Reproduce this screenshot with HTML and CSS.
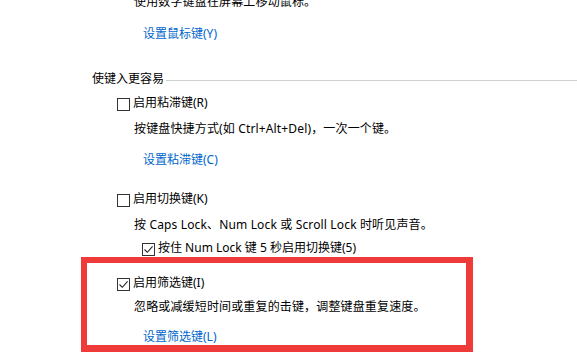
FILE: index.html
```html
<!DOCTYPE html>
<html lang="zh-CN">
<head>
<meta charset="utf-8">
<title>键盘设置</title>
<link rel="stylesheet" href="styles.css">
</head>
<body>
<div class="page">
  <div class="row desc first">使用数字键盘在屏幕上移动鼠标。</div>
  <div class="row link g16">设置鼠标键(Y)</div>

  <div class="row heading g29"><span>使键入更容易</span><span class="rule"></span></div>

  <div class="row check g8"><span class="box"></span><span class="label">启用粘滞键(R)</span></div>
  <div class="row desc g10">按键盘快捷方式(如 Ctrl+Alt+Del)，一次一个键。</div>
  <div class="row link g15">设置粘滞键(C)</div>

  <div class="row check g23"><span class="box"></span><span class="label">启用切换键(K)</span></div>
  <div class="row desc g10">按 Caps Lock、Num Lock 或 Scroll Lock 时听见声音。</div>
  <div class="row check sub g7"><span class="box on"><svg viewBox="0 0 13 13" width="13" height="13"><path d="M2.5 6.5 L5.3 9.3 L10.6 3.4" fill="none" stroke="#222" stroke-width="1.1"/></svg></span><span class="label">按住 Num Lock 键 5 秒启用切换键(5)</span></div>

  <div class="highlight">
    <div class="row check hl"><span class="box on"><svg viewBox="0 0 13 13" width="13" height="13"><path d="M2.5 6.5 L5.3 9.3 L10.6 3.4" fill="none" stroke="#222" stroke-width="1.1"/></svg></span><span class="label">启用筛选键(I)</span></div>
    <div class="row desc hl g8">忽略或减缓短时间或重复的击键，调整键盘重复速度。</div>
    <div class="row link hl g14">设置筛选键(L)</div>
  </div>
</div>
</body>
</html>
```
FILE: styles.css
```css
html, body {
  margin: 0;
  padding: 0;
  background: #ffffff;
}
body {
  width: 577px;
  height: 361px;
  overflow: hidden;
  font-family: "Noto Sans", "Noto Sans CJK SC", sans-serif;
  font-size: 12px;
  color: #000000;
}
.page {
  padding-left: 92px;
}
.row {
  height: 16px;
  line-height: 16px;
  white-space: nowrap;
}
.first { margin-top: -6px; }
.g7 { margin-top: 7px; }
.g8 { margin-top: 8px; }
.g10 { margin-top: 10px; }
.g14 { margin-top: 14px; }
.g15 { margin-top: 15px; }
.g16 { margin-top: 16px; }
.g23 { margin-top: 23px; }
.g29 { margin-top: 29px; }

.desc { margin-left: 42px; letter-spacing: 0.15px; }
.link { margin-left: 51px; color: #0066cc; }

.heading {
  display: flex;
  align-items: center;
}
.heading .rule {
  flex: 1;
  height: 1px;
  background: #cfcfcf;
  margin-left: 2px;
  margin-top: 2px;
}

.check {
  display: flex;
  align-items: center;
  margin-left: 25px;
}
.check.sub { margin-left: 50px; }
.box {
  box-sizing: border-box;
  width: 13px;
  height: 13px;
  border: 1px solid #333333;
  background: #ffffff;
  margin-right: 3px;
  margin-top: 3px;
  position: relative;
}
.box svg {
  position: absolute;
  left: -1px;
  top: -1px;
}

.highlight {
  box-sizing: border-box;
  margin-top: 1px;
  margin-left: -11px;
  width: 392px;
  height: 95px;
  border-style: solid;
  border-color: #ef3a3a;
  border-width: 6px 7px 7px 6px;
  padding-top: 12px;
}
.highlight .check.hl { margin-left: 30px; }
.highlight .desc.hl { margin-left: 47px; }
.highlight .link.hl { margin-left: 56px; }
```
